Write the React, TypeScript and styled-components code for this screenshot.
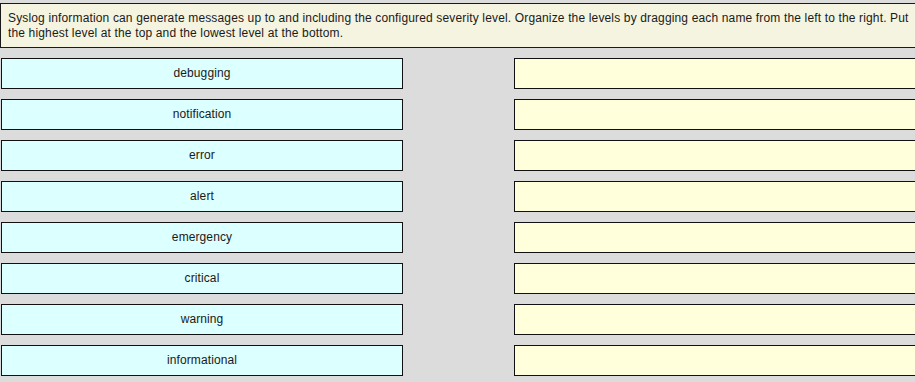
import React from "react";
import styled, { createGlobalStyle } from "styled-components";

const Global = createGlobalStyle`
  html, body {
    margin: 0;
    padding: 0;
    background: #dcdcdc;
    overflow: hidden;
  }
  body {
    font-family: "Liberation Sans", Arial, sans-serif;
  }
`;

const Page = styled.div`
  width: 915px;
  height: 382px;
  overflow: hidden;
  padding-top: 3px;
  box-sizing: border-box;
`;

const Instructions = styled.div`
  width: 930px;
  box-sizing: border-box;
  background: #f4f4e0;
  border: 1px solid #1a1a1a;
  padding: 7px 20px 6px 7px;
  font-size: 12px;
  letter-spacing: 0.15px;
  line-height: 15px;
  color: #1a1a1a;
`;

const Board = styled.div`
  display: grid;
  grid-template-columns: 402px 420px;
  column-gap: 111px;
  row-gap: 10px;
  margin-top: 10px;
  padding-left: 1px;
`;

const Slot = styled.div<{ $kind: "source" | "target" }>`
  height: 31px;
  box-sizing: border-box;
  border: 1px solid #111;
  background: ${(p) => (p.$kind === "source" ? "#dcffff" : "#ffffdc")};
  display: flex;
  align-items: center;
  justify-content: center;
  padding-bottom: 1px;
  font-size: 12px;
  letter-spacing: 0.1px;
  color: #1a1a1a;
`;

const levels = [
  "debugging",
  "notification",
  "error",
  "alert",
  "emergency",
  "critical",
  "warning",
  "informational",
];

export default function App() {
  return (
    <>
      <Global />
      <Page>
        <Instructions>
          Syslog information can generate messages up to and including the configured severity level. Organize the levels by dragging each name from the left to the right. Put the highest level at the top and the lowest level at the bottom.
        </Instructions>
        <Board>
          {levels.map((l) => (
            <React.Fragment key={l}>
              <Slot $kind="source">{l}</Slot>
              <Slot $kind="target" />
            </React.Fragment>
          ))}
        </Board>
      </Page>
    </>
  );
}
